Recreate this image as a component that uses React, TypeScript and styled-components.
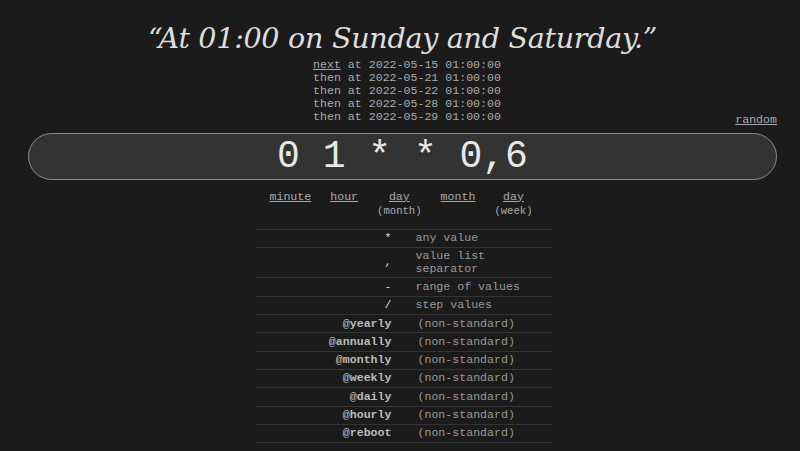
import React from 'react';
import styled, { createGlobalStyle } from 'styled-components';

const Global = createGlobalStyle`
  html, body {
    margin: 0;
    padding: 0;
    background: #1b1b1b;
  }
  body {
    font-family: "Liberation Mono", "Courier New", monospace;
    color: #aaa;
  }
`;

const mono = `"Liberation Mono", "Courier New", monospace`;

const next = ['2022-05-15', '2022-05-21', '2022-05-22', '2022-05-28', '2022-05-29'];

const symbols = [
  { key: '*', text: 'any value' },
  { key: ',', text: 'value list separator' },
  { key: '-', text: 'range of values' },
  { key: '/', text: 'step values' },
];

const specials = ['yearly', 'annually', 'monthly', 'weekly', 'daily', 'hourly', 'reboot'];

export default function App() {
  return (
    <S.Page>
      <Global />
      <S.Title>“At 01:00 on Sunday and Saturday.”</S.Title>
      <S.NextList>
        {next.map((d, i) => (
          <S.NextLine key={d}>
            {i === 0 ? <S.Link>next</S.Link> : 'then'} at {d} 01:00:00
          </S.NextLine>
        ))}
      </S.NextList>
      <S.RandomRow>
        <S.Link>random</S.Link>
      </S.RandomRow>
      <S.Input>0 1 * * 0,6</S.Input>
      <S.Parts>
        <S.Part>
          <S.Link>minute</S.Link>
        </S.Part>
        <S.Part>
          <S.Link>hour</S.Link>
        </S.Part>
        <S.Part>
          <S.Link>day</S.Link>
          <S.Sub>(month)</S.Sub>
        </S.Part>
        <S.Part>
          <S.Link>month</S.Link>
        </S.Part>
        <S.Part>
          <S.Link>day</S.Link>
          <S.Sub>(week)</S.Sub>
        </S.Part>
      </S.Parts>
      <S.Table>
        <tbody>
          {symbols.map((s) => (
            <tr key={s.key}>
              <S.KeyCell $bright>{s.key}</S.KeyCell>
              <S.DescCell>{s.text}</S.DescCell>
            </tr>
          ))}
          {specials.map((s) => (
            <tr key={s}>
              <S.KeyCell>
                @<b>{s}</b>
              </S.KeyCell>
              <S.DescCell $wide>(non-standard)</S.DescCell>
            </tr>
          ))}
          <tr>
            <S.KeyCell />
            <S.DescCell />
          </tr>
        </tbody>
      </S.Table>
    </S.Page>
  );
}

const S = {
  Page: styled.div`
    display: flex;
    flex-direction: column;
    align-items: center;
    padding: 0 23px 0 28px;
  `,
  Title: styled.h1`
    margin: 18px 0 0;
    font-family: "DejaVu Serif", Georgia, serif;
    font-style: italic;
    font-weight: normal;
    font-size: 28.6px;
    line-height: 40px;
    color: #ddd;
    letter-spacing: -0.3px;
  `,
  NextList: styled.div`
    display: flex;
    flex-direction: column;
    align-items: center;
    margin-top: 1px;
    padding-left: 9px;
  `,
  NextLine: styled.div`
    font-family: ${mono};
    font-size: 11.6px;
    line-height: 12.9px;
    color: #aaa;
    white-space: pre;
  `,
  Link: styled.span`
    text-decoration: underline;
    color: #aaa;
  `,
  Sub: styled.span`
    font-size: 10.6px;
  `,
  RandomRow: styled.div`
    align-self: stretch;
    display: flex;
    justify-content: flex-end;
    font-size: 11.6px;
    line-height: 12px;
    margin-top: -10px;
  `,
  Input: styled.div`
    align-self: stretch;
    height: 45px;
    margin-top: 7px;
    border: 1px solid #8a8a8a;
    border-radius: 24px;
    background: #333;
    display: flex;
    align-items: center;
    justify-content: center;
    font-family: ${mono};
    font-size: 38px;
    color: #e8e8e8;
    white-space: pre;
  `,
  Parts: styled.div`
    display: flex;
    gap: 19px;
    margin-top: 10px;
    font-size: 11.6px;
    line-height: 14px;
    margin-left: -3px;
  `,
  Part: styled.div`
    display: flex;
    flex-direction: column;
    align-items: center;
    color: #aaa;
  `,
  Table: styled.table`
    margin-top: 11px;
    border-collapse: collapse;
    width: 297px;
    font-size: 11.6px;
    line-height: 12.3px;
    margin-left: 3px;
    tr {
      border-top: 1px solid #333;
    }
    tr:last-child td {
      height: 4px;
      padding: 0;
    }
  `,
  KeyCell: styled.td<{ $bright?: boolean }>`
    width: 137px;
    text-align: right;
    padding: 2.5px 24px 2.5px 0;
    color: ${(p) => (p.$bright ? '#ddd' : '#bbb')};
    vertical-align: middle;
    b {
      font-weight: bold;
    }
  `,
  DescCell: styled.td<{ $wide?: boolean }>`
    padding: 2.5px 0;
    color: #999;
    width: 136px;
    ${(p) => (p.$wide ? 'padding-left: 2px;' : '')}
  `,
};
